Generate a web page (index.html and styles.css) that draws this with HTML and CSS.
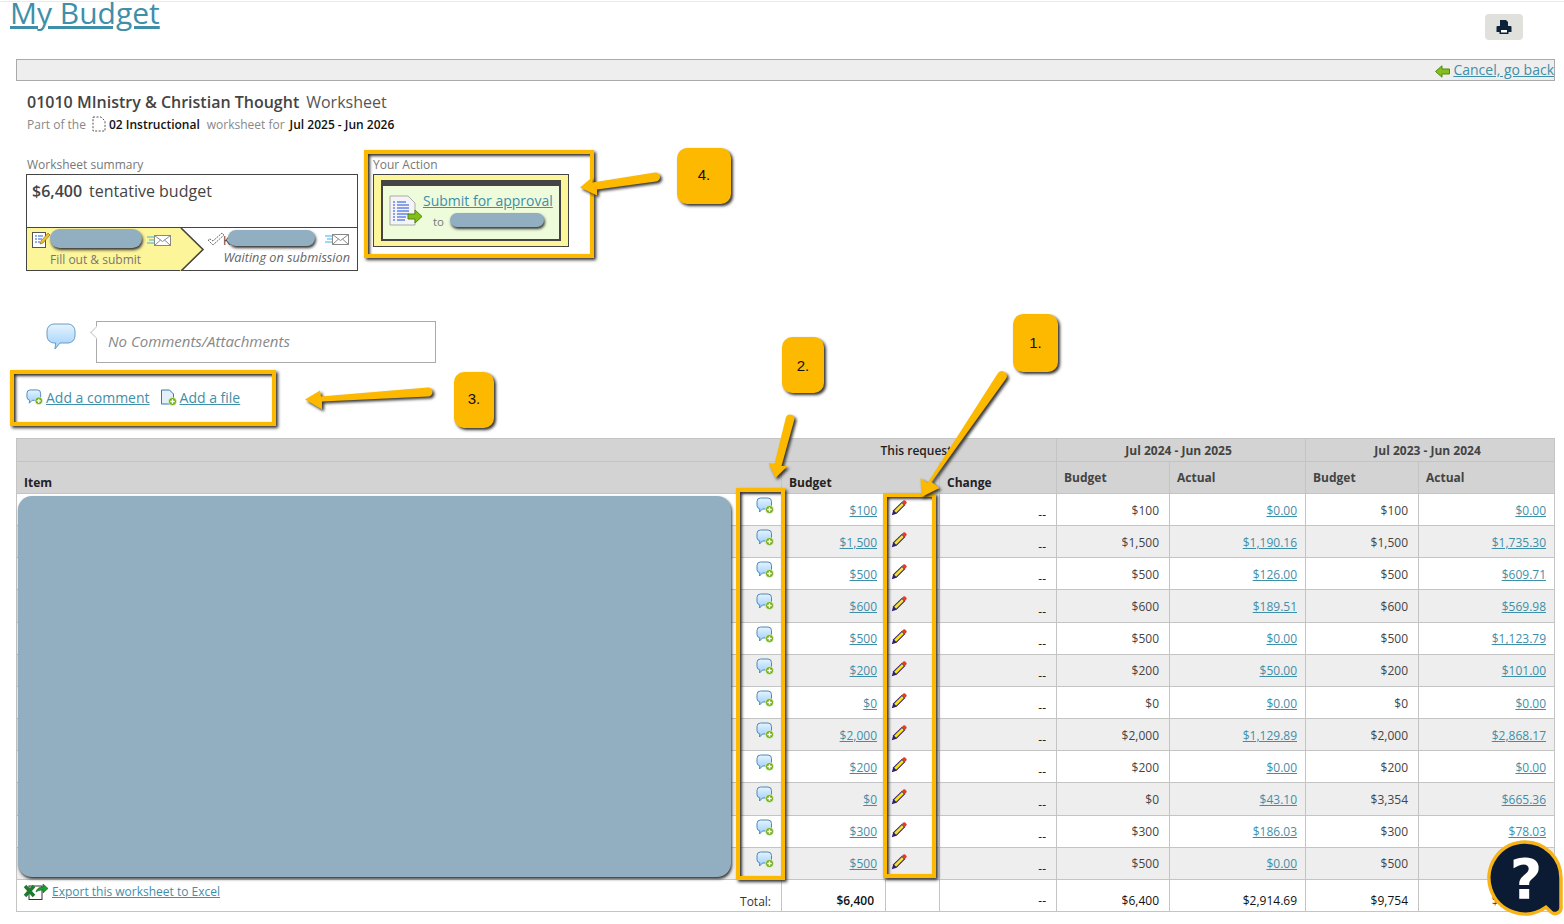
FILE: index.html
```html
<!DOCTYPE html>
<html lang="en">
<head>
<meta charset="utf-8">
<title>My Budget</title>
<link rel="stylesheet" href="styles.css">
</head>
<body>
<svg class="sprite" aria-hidden="true">
  <defs>
    <linearGradient id="bub" x1="0" y1="0" x2="0" y2="1"><stop offset="0" stop-color="#e6f3ff"/><stop offset="1" stop-color="#9ccffb"/></linearGradient>
    <symbol id="i-comment" viewBox="0 0 18 18">
      <path d="M4.500 1h7.500a3.500 3.500 0 0 1 3.500 3.500v4a3.500 3.500 0 0 1-3.500 3.500H6.500L3.500 15l.3-3.100A3.500 3.500 0 0 1 1 8.500v-4A3.500 3.500 0 0 1 4.500 1z" fill="url(#bub)" stroke="#4f88b8" stroke-width="1"/>
      <circle cx="13.500" cy="12.500" r="4" fill="#6fae13" stroke="#fff" stroke-width=".6"/>
      <path d="M13.500 10.300v4.400M11.300 12.500h4.400" stroke="#fff" stroke-width="1.400"/>
    </symbol>
    <symbol id="i-pencil" viewBox="0 0 16 16">
      <path d="M.8 15.200l1.400-4.900L11 1.700l3.300 3.300L5.600 13.800z" fill="#2f1b70"/>
      <path d="M3.200 10.700l7.800-7.600 1.900 1.900-7.800 7.800z" fill="#f8e21e"/>
      <path d="M11 1.800l1.400-1.200a1.300 1.300 0 0 1 1.800 0l1.100 1.100a1.300 1.300 0 0 1 0 1.800L14 5z" fill="#ea3b24"/>
    </symbol>
    <symbol id="i-mail" viewBox="0 0 24 11">
      <path d="M0 2h7M2 5h5M0 8h7" stroke="#3db1ea" stroke-width="1"/>
      <rect x="7.500" y=".5" width="16" height="10" fill="#fff" stroke="#888"/>
      <path d="M7.500.5l8 6 8-6M7.500 10.500l6-5.500M23.500 10.500l-6-5.500" fill="none" stroke="#888"/>
    </symbol>
  </defs>
</svg>

<div class="topline"></div>

<header class="titlebar">
  <h1 class="title"><a href="#">My Budget</a></h1>
  <button class="print" type="button" aria-label="Print">
    <svg width="16" height="16" viewBox="0 0 16 16"><path d="M4 1h6l2 2v4h2.500a1 1 0 0 1 1 1v5h-3v2H3.500v-2H.5V8a1 1 0 0 1 1-1H4z" fill="#0d2238"/><rect x="5" y="11" width="6" height="2.500" fill="#fff"/></svg>
  </button>
</header>

<div class="toolbar">
  <svg class="back" width="15" height="13" viewBox="0 0 15 13"><path d="M.5 6.500L7 .8v3.200h7.500v5H7v3.200z" fill="#86bd1c" stroke="#4f8a10"/></svg>
  <a href="#">Cancel, go back</a>
</div>

<main class="content">
  <h2 class="heading"><strong>01010 MInistry &amp; Christian Thought</strong><span>Worksheet</span></h2>
  <p class="sub">
    <span>Part of the</span>
    <svg class="dashdoc" width="14" height="16" viewBox="0 0 14 16"><path d="M1 1h8l4 4v10H1z" fill="#fff" stroke="#555" stroke-dasharray="2 1.500"/></svg>
    <b class="s-cat">02 Instructional</b>
    <span class="s-for">worksheet for</span>
    <b class="s-per">Jul 2025 - Jun 2026</b>
  </p>

  <section class="summary-row">
    <div class="summary">
      <div class="label">Worksheet summary</div>
      <div class="sumbox">
        <div class="sumtop"><strong>$6,400</strong><span>tentative budget</span></div>
        <div class="steps">
          <div class="step current">
            <svg class="st-ico" width="19" height="17" viewBox="0 0 19 17"><rect x=".5" y="1.500" width="13" height="15" fill="#fff" stroke="#555"/><path d="M3 5h2M6 5h5M3 8h2M6 8h4M3 11h2M6 11h2" stroke="#2d5fd0"/><path d="M8 13l1-3 7-8 2 2-7 8z" fill="#f2c230" stroke="#8a5a20" stroke-width=".6"/></svg>
            <svg class="st-mail" width="24" height="11"><use href="#i-mail"/></svg>
            <span class="st-text">Fill out &amp; submit</span>
          </div>
          <div class="step waiting">
            <svg class="st-ico" width="18" height="14" viewBox="0 0 18 14"><path d="M1 8l5 5L17 3l-2-2-9 8-3-2z" fill="#fff" stroke="#666" stroke-dasharray="2 1"/></svg>
            <span class="st-k">K</span>
            <svg class="st-mail" width="24" height="11"><use href="#i-mail"/></svg>
            <em class="st-text">Waiting on submission</em>
          </div>
          <svg class="chevron" width="26" height="43" viewBox="0 0 26 43"><path d="M0 0h1.500L23 21.500 1.500 43H0z" fill="#fdf59a"/><path d="M1 0l22 21.500L1 43" fill="none" stroke="#444" stroke-width="1.600"/></svg>
        </div>
      </div>
    </div>
    <div class="action">
      <div class="label">Your Action</div>
      <div class="actbox">
        <div class="actinner">
          <svg class="actico" width="34" height="32" viewBox="0 0 34 32"><path d="M1 1h18l7 7v22H1z" fill="#f4f4f4" stroke="#aaa"/><path d="M4 7h2M8 7h9M4 10h2M8 10h12M4 13h2M8 13h12M4 16h2M8 16h12M4 19h2M8 19h12M4 22h2M8 22h9M4 25h2M8 25h8" stroke="#1c4fe0"/><path d="M19 19h7v-4l7 6.500-7 6.500v-4h-7z" fill="#85bd17" stroke="#4f8a10"/></svg>
          <div>
            <a class="submit" href="#">Submit for approval</a>
            <div class="to">to</div>
          </div>
        </div>
      </div>
    </div>
  </section>

  <section class="comments">
    <svg class="bigbub" width="30" height="28" viewBox="0 0 30 28"><path d="M8 1h14a7 7 0 0 1 7 7v5a7 7 0 0 1-7 7H14l-5 6 .6-6H8a7 7 0 0 1-7-7V8a7 7 0 0 1 7-7z" fill="url(#bub)" stroke="#6a9cc4"/></svg>
    <div class="combox">No Comments/Attachments</div>
  </section>

  <nav class="addlinks">
    <svg class="ai" width="17" height="17"><use href="#i-comment"/></svg>
    <a href="#">Add a comment</a>
    <svg class="ai second" width="17" height="17" viewBox="0 0 17 17"><path d="M1.500 1h8l4 4v10h-12z" fill="#e3f0fb" stroke="#3a78ad"/><circle cx="12.500" cy="12.500" r="4" fill="#6fae13" stroke="#fff" stroke-width=".6"/><path d="M12.500 10.300v4.400M10.300 12.500h4.400" stroke="#fff" stroke-width="1.400"/></svg>
    <a href="#">Add a file</a>
  </nav>
</main>

<table class="budget">
  <colgroup>
    <col class="c-item"><col class="c-budget"><col class="c-pen"><col class="c-change">
    <col class="c-b"><col class="c-a"><col class="c-b"><col class="c-a">
  </colgroup>
  <thead>
    <tr class="h1">
      <th></th>
      <th colspan="3" class="req">This request</th>
      <th colspan="2">Jul 2024 - Jun 2025</th>
      <th colspan="2">Jul 2023 - Jun 2024</th>
    </tr>
    <tr class="h2">
      <th class="low">Item</th>
      <th class="low" colspan="2">Budget</th>
      <th class="low">Change</th>
      <th>Budget</th><th>Actual</th><th>Budget</th><th>Actual</th>
    </tr>
  </thead>
  <tbody>
    <tr><td class="ic"><svg width="18" height="18"><use href="#i-comment"/></svg></td><td class="n"><a href="#">$100</a></td><td class="pen"><svg width="16" height="16"><use href="#i-pencil"/></svg></td><td class="chg">--</td><td class="n">$100</td><td class="n"><a href="#">$0.00</a></td><td class="n">$100</td><td class="n"><a href="#">$0.00</a></td></tr>
    <tr><td class="ic"><svg width="18" height="18"><use href="#i-comment"/></svg></td><td class="n"><a href="#">$1,500</a></td><td class="pen"><svg width="16" height="16"><use href="#i-pencil"/></svg></td><td class="chg">--</td><td class="n">$1,500</td><td class="n"><a href="#">$1,190.16</a></td><td class="n">$1,500</td><td class="n"><a href="#">$1,735.30</a></td></tr>
    <tr><td class="ic"><svg width="18" height="18"><use href="#i-comment"/></svg></td><td class="n"><a href="#">$500</a></td><td class="pen"><svg width="16" height="16"><use href="#i-pencil"/></svg></td><td class="chg">--</td><td class="n">$500</td><td class="n"><a href="#">$126.00</a></td><td class="n">$500</td><td class="n"><a href="#">$609.71</a></td></tr>
    <tr><td class="ic"><svg width="18" height="18"><use href="#i-comment"/></svg></td><td class="n"><a href="#">$600</a></td><td class="pen"><svg width="16" height="16"><use href="#i-pencil"/></svg></td><td class="chg">--</td><td class="n">$600</td><td class="n"><a href="#">$189.51</a></td><td class="n">$600</td><td class="n"><a href="#">$569.98</a></td></tr>
    <tr><td class="ic"><svg width="18" height="18"><use href="#i-comment"/></svg></td><td class="n"><a href="#">$500</a></td><td class="pen"><svg width="16" height="16"><use href="#i-pencil"/></svg></td><td class="chg">--</td><td class="n">$500</td><td class="n"><a href="#">$0.00</a></td><td class="n">$500</td><td class="n"><a href="#">$1,123.79</a></td></tr>
    <tr><td class="ic"><svg width="18" height="18"><use href="#i-comment"/></svg></td><td class="n"><a href="#">$200</a></td><td class="pen"><svg width="16" height="16"><use href="#i-pencil"/></svg></td><td class="chg">--</td><td class="n">$200</td><td class="n"><a href="#">$50.00</a></td><td class="n">$200</td><td class="n"><a href="#">$101.00</a></td></tr>
    <tr><td class="ic"><svg width="18" height="18"><use href="#i-comment"/></svg></td><td class="n"><a href="#">$0</a></td><td class="pen"><svg width="16" height="16"><use href="#i-pencil"/></svg></td><td class="chg">--</td><td class="n">$0</td><td class="n"><a href="#">$0.00</a></td><td class="n">$0</td><td class="n"><a href="#">$0.00</a></td></tr>
    <tr><td class="ic"><svg width="18" height="18"><use href="#i-comment"/></svg></td><td class="n"><a href="#">$2,000</a></td><td class="pen"><svg width="16" height="16"><use href="#i-pencil"/></svg></td><td class="chg">--</td><td class="n">$2,000</td><td class="n"><a href="#">$1,129.89</a></td><td class="n">$2,000</td><td class="n"><a href="#">$2,868.17</a></td></tr>
    <tr><td class="ic"><svg width="18" height="18"><use href="#i-comment"/></svg></td><td class="n"><a href="#">$200</a></td><td class="pen"><svg width="16" height="16"><use href="#i-pencil"/></svg></td><td class="chg">--</td><td class="n">$200</td><td class="n"><a href="#">$0.00</a></td><td class="n">$200</td><td class="n"><a href="#">$0.00</a></td></tr>
    <tr><td class="ic"><svg width="18" height="18"><use href="#i-comment"/></svg></td><td class="n"><a href="#">$0</a></td><td class="pen"><svg width="16" height="16"><use href="#i-pencil"/></svg></td><td class="chg">--</td><td class="n">$0</td><td class="n"><a href="#">$43.10</a></td><td class="n">$3,354</td><td class="n"><a href="#">$665.36</a></td></tr>
    <tr><td class="ic"><svg width="18" height="18"><use href="#i-comment"/></svg></td><td class="n"><a href="#">$300</a></td><td class="pen"><svg width="16" height="16"><use href="#i-pencil"/></svg></td><td class="chg">--</td><td class="n">$300</td><td class="n"><a href="#">$186.03</a></td><td class="n">$300</td><td class="n"><a href="#">$78.03</a></td></tr>
    <tr><td class="ic"><svg width="18" height="18"><use href="#i-comment"/></svg></td><td class="n"><a href="#">$500</a></td><td class="pen"><svg width="16" height="16"><use href="#i-pencil"/></svg></td><td class="chg">--</td><td class="n">$500</td><td class="n"><a href="#">$0.00</a></td><td class="n">$500</td><td class="n"><a href="#">$0.00</a></td></tr>
  </tbody>
  <tfoot>
    <tr>
      <td class="foot">
        <div class="footflex">
          <span class="export">
            <svg width="24" height="17" viewBox="0 0 24 17"><rect x="5" y="3" width="13" height="13.500" fill="#fff" stroke="#333"/><path d="M1 3l9 10M10 3L1 13" stroke="#1e7b2e" stroke-width="3.500"/><path d="M12 9c1-4 4-5 7-5V1l5 4.500-5 4.500V7c-3 0-5 .5-7 2z" fill="#17a02c" stroke="#0c5a18" stroke-width=".6"/></svg>
            <a href="#">Export this worksheet to Excel</a>
          </span>
          <span class="tot">Total:</span>
        </div>
      </td>
      <td class="t t-b">$6,400</td>
      <td></td>
      <td class="t chg">--</td>
      <td class="t">$6,400</td>
      <td class="t">$2,914.69</td>
      <td class="t">$9,754</td>
      <td class="t red">$6,751.34</td>
    </tr>
  </tfoot>
</table>

<!-- Redactions and annotations drawn over the screenshot -->
<div class="blob b-items"></div>
<div class="pill p-a"></div>
<div class="pill p-b"></div>
<div class="pill p-c"></div>

<div class="mark m-action"></div>
<div class="mark m-add"></div>
<div class="mark m-comment"></div>
<div class="mark m-pencil"></div>

<svg class="arrows" width="1564" height="924" viewBox="0 0 1564 924" aria-hidden="true">
  <g fill="#fdb900">
    <path d="M655 172.500a4.500 4.500 0 0 1 1 9l-59 8 0 6-17-8 13-11-.500 6z"/>
    <path d="M428 387.500a4.500 4.500 0 0 1 0 9l-106 5 0 8-17-10 15-9 1 6z"/>
    <path d="M786 417a4.500 4.500 0 0 1 8.500 2l-13 47 6 0-12 12-7-15 6 1z"/>
    <path d="M998 373a5 5 0 0 1 8.500 5l-75 104 8 6-18 9-1-19 7 5z"/>
  </g>
</svg>

<div class="callout c1">1.</div>
<div class="callout c2">2.</div>
<div class="callout c3">3.</div>
<div class="callout c4">4.</div>

<div class="help">
  <svg width="76" height="78" viewBox="0 0 76 78"><path d="M38 2A36 36 0 0 1 74 38V67a6 6 0 0 1-10 5l-5-4.800A36 36 0 1 1 38 2z" fill="#0b1b33" stroke="#f7b318" stroke-width="3.500"/></svg>
  <span class="q">?</span>
</div>
</body>
</html>
```
FILE: styles.css
```css
* { box-sizing: border-box; }
html, body { margin: 0; padding: 0; }
body {
  position: relative;
  width: 1564px;
  height: 924px;
  overflow: hidden;
  background: #fff;
  font-family: "Open Sans", sans-serif;
  font-size: 12px;
  color: #444;
}
a { color: #3f8fa9; text-decoration: underline; }
.sprite { position: absolute; width: 0; height: 0; }

.topline { height: 1px; margin-top: 1px; background: #f6e8da; }

.titlebar {
  display: flex;
  justify-content: space-between;
  align-items: flex-start;
  height: 57px;
  padding: 0 41px 0 10px;
}
.title { margin: 0; font-size: 30px; font-weight: 400; line-height: 21px; }
.print {
  width: 38px;
  height: 26px;
  margin-top: 12px;
  padding: 0;
  display: flex;
  align-items: center;
  justify-content: center;
  border: 0;
  border-radius: 4px;
  background: #e0e0dc;
}

.toolbar {
  display: flex;
  align-items: center;
  justify-content: flex-end;
  gap: 3px;
  width: 1539px;
  height: 22px;
  margin-left: 16px;
  padding-bottom: 2px;
  border: 1px solid #aaa;
  background: #eee;
  font-size: 14px;
}
.back { margin-top: 5px; }

.content { padding-left: 26px; }
.heading { margin: 10px 0 0 1px; font-size: 16px; line-height: 22px; font-weight: 400; color: #555; }
.heading strong { font-weight: 600; color: #444; margin-right: 7px; }
.sub { display: flex; align-items: center; height: 16px; margin: 3px 0 0 1px; font-size: 12px; color: #888; }
.sub b { font-weight: 600; color: #111; }
.dashdoc { flex: none; margin-left: 6px; }
.s-cat { margin-left: 3px; }
.s-for { margin-left: 7px; }
.s-per { margin-left: 5px; }

.summary-row { display: flex; gap: 15px; margin-top: 25px; align-items: flex-start; }
.label { height: 17px; font-size: 12px; line-height: 15px; color: #777; }
.summary .label { padding-left: 1px; }
.sumbox { width: 332px; height: 97px; border: 1px solid #444; }
.sumtop { height: 53px; padding: 5px 5px 0; font-size: 16px; line-height: 22px; color: #444; border-bottom: 1px solid #444; }
.sumtop strong { font-weight: 600; margin-right: 7px; }
.steps { position: relative; display: flex; height: 42px; }
.step { position: relative; height: 42px; }
.current { width: 154px; background: #fdf59a; }
.waiting { flex: 1; }
.st-ico { position: absolute; left: 5px; top: 3px; }
.waiting .st-ico { left: 26px; top: 4px; }
.st-mail { position: absolute; left: 120px; top: 7px; }
.waiting .st-mail { left: 144px; top: 6px; }
.st-k { position: absolute; left: 42px; top: 4px; font-size: 12px; }
.st-text { position: absolute; font-size: 12px; line-height: 16px; }
.current .st-text { left: 23px; top: 24px; color: #777; }
.waiting .st-text { right: 7px; top: 21px; font-size: 12.700px; color: #666; }
.chevron { position: absolute; left: 153px; top: 0; }

.actbox { width: 196px; height: 73px; padding: 5px 7px 6px; border: 1px solid #444; background: #fdf59a; }
.actinner {
  display: flex;
  height: 61px;
  padding-left: 6px;
  background: #eefcdc;
  border: 2px solid #444;
  border-top-width: 6px;
}
.actico { margin-top: 9px; flex: none; }
.submit { display: block; margin-top: 5px; font-size: 14px; line-height: 20px; }
.to { margin: 3px 0 0 10px; font-size: 11.500px; line-height: 16px; color: #777; }

.comments { display: flex; align-items: flex-start; margin: 50px 0 0 20px; }
.bigbub { margin-top: 2px; flex: none; }
.combox {
  position: relative;
  width: 340px;
  height: 42px;
  margin-left: 20px;
  padding-left: 11px;
  border: 1px solid #aaa;
  font-size: 15px;
  font-style: italic;
  line-height: 38px;
  color: #888;
}
.combox::before {
  content: "";
  position: absolute;
  left: -5px;
  top: 6px;
  width: 8px;
  height: 8px;
  background: #fff;
  border-left: 1px solid #ccc;
  border-bottom: 1px solid #ccc;
  transform: rotate(45deg);
}

.addlinks { display: flex; align-items: center; height: 16px; margin-top: 26px; font-size: 14px; }
.ai { margin-right: 3px; flex: none; }
.ai.second { margin-left: 10px; }

.budget {
  width: 1538px;
  margin: 33px 0 0 16px;
  border-collapse: collapse;
  table-layout: fixed;
  font-size: 12px;
}
.c-item { width: 765px; }
.c-budget { width: 104px; }
.c-pen { width: 54px; }
.c-change { width: 117px; }
.c-b { width: 113px; }
.c-a { width: 136px; }
.budget th, .budget td { border: 1px solid #c4c4c4; padding: 0 8px; }
.budget th { background: #d3d3d3; text-align: left; font-weight: 700; color: #444; padding-left: 7px; }
.h1 { height: 23px; }
.budget .h1 th { text-align: center; font-weight: 700; padding-right: 12px; }
.budget .h1 th.req { font-weight: 600; color: #222; }
.h1 th:first-child { border-right: 0; }
.h1 th.req { border-left: 0; }
.h2 { height: 32px; }
.budget .low { vertical-align: bottom; padding-bottom: 2px; color: #222; }
tbody tr { height: 32.170px; }
tbody tr:nth-child(even) td { background: #eee; }
.budget td.ic { padding: 3px 7px 0 0; text-align: right; vertical-align: top; }
.ic svg, .pen svg { display: inline-block; vertical-align: top; }
.budget td.n { text-align: right; padding-top: 1px; }
.budget td:nth-child(5), .budget td:nth-child(7) { padding-right: 10px; }
.budget td.pen { vertical-align: top; padding: 6px 0 0 5px; }
.budget td.chg { text-align: right; vertical-align: bottom; padding: 0 10px 2px 0; color: #222; }
tfoot tr { height: 32px; }
.budget td.foot { vertical-align: top; padding: 3px 10px 0 7px; }
.footflex { display: flex; justify-content: space-between; height: 27px; }
.export { display: flex; align-items: flex-start; gap: 4px; font-size: 12px; line-height: 18px; }
.tot { align-self: flex-end; line-height: 16px; color: #333; }
.budget td.t { text-align: right; vertical-align: bottom; padding-bottom: 2px; color: #111; }
.budget td.t-b { font-weight: 600; padding-right: 11px; color: #111; }
.budget td.red { color: #8a2a20; }

.blob, .pill { position: absolute; background: #92afc1; box-shadow: 1px 2px 3px #333; }
.b-items { left: 18px; top: 496px; width: 713px; height: 381px; border-radius: 14px; }
.pill { border-radius: 10px; }
.p-a { left: 50px; top: 229px; width: 92px; height: 19px; }
.p-b { left: 228px; top: 230px; width: 87px; height: 16px; }
.p-c { left: 450px; top: 213px; width: 94px; height: 14px; }

.mark { position: absolute; border: 4px solid #fdb900; box-shadow: 2px 2px 3px #333, inset 2px 2px 3px #333; }
.m-action { left: 364px; top: 150px; width: 230px; height: 108px; }
.m-add { left: 10px; top: 370px; width: 266px; height: 56px; }
.m-comment { left: 736px; top: 488px; width: 49px; height: 392px; }
.m-pencil { left: 883px; top: 493px; width: 53px; height: 385px; }

.arrows { position: absolute; left: 0; top: 0; filter: drop-shadow(2px 2px 1.500px #333); pointer-events: none; }

.callout {
  position: absolute;
  display: flex;
  align-items: center;
  justify-content: center;
  background: #fdb900;
  border-radius: 10px;
  box-shadow: 2px 2px 3px #333;
  font-family: "Liberation Sans", Arial, sans-serif;
  font-size: 15px;
  color: #111;
}
.c1 { left: 1013px; top: 314px; width: 45px; height: 58px; padding-bottom: 2px; }
.c2 { left: 782px; top: 337px; width: 42px; height: 56px; }
.c3 { left: 454px; top: 372px; width: 40px; height: 56px; padding-bottom: 4px; }
.c4 { left: 677px; top: 148px; width: 54px; height: 56px; padding-bottom: 4px; }

.help { position: absolute; left: 1487px; top: 840px; width: 76px; height: 78px; }
.help svg { display: block; }
.q {
  position: absolute;
  left: 0;
  top: 0;
  width: 78px;
  height: 78px;
  display: flex;
  align-items: center;
  justify-content: center;
  font-family: "DejaVu Sans", sans-serif;
  font-weight: 700;
  font-size: 56px;
  line-height: 1;
  color: #fff;
}
```
